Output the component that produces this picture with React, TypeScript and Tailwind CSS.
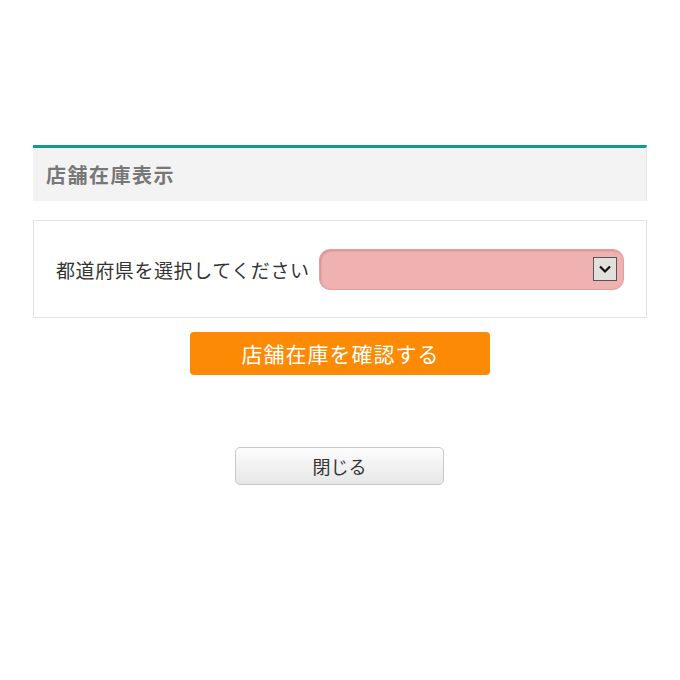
import React from "react";

export default function App() {
  const font = { fontFamily: '"Noto Sans CJK JP", "Noto Sans", sans-serif' };
  return (
    <div className="w-[680px] h-[680px] bg-white" style={font}>
      <div className="pt-[145px] px-[33px] w-[680px]">
        <div className="border-t-[3px] border-[#109c8c] bg-[#f3f3f3] h-[56px] flex items-center pl-[13px] border-r border-r-[#e6e6e6]">
          <span className="text-[20px] font-bold text-[#777777] leading-none tracking-[1.5px]">店舗在庫表示</span>
        </div>
        <div className="mt-[19px] border border-[#e3e3e3] h-[98px] flex items-center pl-[22px]">
          <span className="text-[19px] text-[#333333] leading-none tracking-[0.6px] whitespace-nowrap">都道府県を選択してください</span>
          <div className="ml-[9px] w-[305px] h-[41px] rounded-[11px] bg-[#f0b1b1] border border-[#e3a0a0] shadow-[inset_1px_1px_2px_rgba(150,80,80,0.35)] flex items-center justify-end pr-[6px]">
            <div className="w-[24px] h-[24px] bg-[#e2e0dc] border border-[#555] flex items-center justify-center">
              <svg width="14" height="10" viewBox="0 0 14 10">
                <path d="M2 2.5 L7 7.5 L12 2.5" fill="none" stroke="#111" strokeWidth="2.2" />
              </svg>
            </div>
          </div>
        </div>
        <div className="flex justify-center mt-[14px]">
          <div className="w-[300px] h-[43px] bg-[#fd8a04] rounded-[4px] flex items-center justify-center">
            <span className="text-white text-[21px] leading-none tracking-[1px] pl-[1px]">店舗在庫を確認する</span>
          </div>
        </div>
        <div className="flex justify-center mt-[72px] pr-[1px]">
          <div className="w-[209px] h-[38px] rounded-[5px] border border-[#c9c9c9] bg-gradient-to-b from-[#fdfdfd] to-[#e6e6e6] flex items-center justify-center">
            <span className="text-[18px] text-[#333] leading-none">閉じる</span>
          </div>
        </div>
      </div>
    </div>
  );
}
